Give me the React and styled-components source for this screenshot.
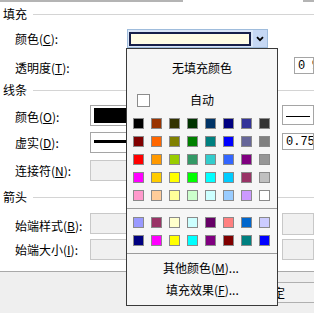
import React from "react";
import styled, { createGlobalStyle } from "styled-components";

const Global = createGlobalStyle`
  html, body { margin: 0; padding: 0; background: #fff; }
  body { width: 314px; height: 313px; overflow: hidden; font-family: "Noto Sans CJK SC", "Noto Sans", sans-serif; font-size: 12px; color: #000; }
  #root { width: 314px; height: 313px; }
`;

const Dialog = styled.div`
  position: relative;
  width: 314px;
  height: 313px;
  overflow: hidden;
  background: #fff;
  display: flex;
  flex-direction: column;
`;

const TopBar = styled.div`
  height: 2px;
  display: grid;
  grid-template-columns: 183px 1fr 11px;
  & > span:nth-child(1), & > span:nth-child(3) { background: #b4b4b4; }
`;

const Heading = styled.div`
  margin-top: ${p => p.$mt}px;
  height: 16px;
  padding-left: 3px;
  display: flex;
  align-items: center;
  gap: 6px;
  line-height: 16px;
  white-space: nowrap;
  &::after { content: ""; flex: 1; height: 1px; background: #d4d4d4; }
`;

const Row = styled.div`
  margin-top: ${p => p.$mt}px;
  height: ${p => p.$h}px;
  padding-left: 15px;
  display: grid;
  grid-template-columns: ${p => p.$cols};
  align-items: stretch;
`;

const Label = styled.div`
  display: flex;
  align-items: center;
  white-space: nowrap;
  padding-top: ${p => p.$dy || 0}px;
  u { text-decoration: underline; }
`;

const Field = styled.div`
  box-sizing: border-box;
  border: 1px solid ${p => (p.$disabled ? "#c8c8c8" : "#a5a5a5")};
  background: ${p => (p.$disabled ? "#f0f0f0" : "#fff")};
  margin-top: ${p => p.$mt || 0}px;
  height: ${p => p.$h || 21}px;
  margin-left: ${p => p.$ml || 0}px;
  padding: 2px 3px;
  display: flex;
  align-items: center;
  font-family: "Liberation Mono", "DejaVu Sans Mono", monospace;
  font-size: 12px;
  white-space: nowrap;
  overflow: hidden;
`;

const Fill = styled.div`
  flex: 1;
  align-self: stretch;
  background: #000;
`;

const Stroke = styled.div`
  flex: 1;
  height: ${p => p.$w}px;
  background: #000;
  margin-top: ${p => p.$dy || 0}px;
`;

const Combo = styled.div`
  box-sizing: border-box;
  width: 141px;
  height: 19px;
  border: 1px solid #9fbcdc;
  display: grid;
  grid-template-columns: 1fr 14px;
  background: #dbe7f7;
`;

const ComboField = styled.div`
  margin: 2px 2px 1px 1px;
  border: 2px solid #18214a;
  background: #fffde6;
`;

const ComboButton = styled.div`
  background: #c6d8f4;
  display: flex;
  align-items: center;
  justify-content: center;
`;

const Footer = styled.div`
  margin-top: 11px;
  flex: 1;
  border-top: 1px solid #a9a9a9;
  background: #efefef;
  padding: 10px 0 0 228px;
`;

const Button = styled.div`
  box-sizing: border-box;
  width: 90px;
  height: 21px;
  border: 1px solid #b0b0b0;
  background: #f2f2f2;
  display: flex;
  align-items: center;
  justify-content: center;
`;

const Menu = styled.div`
  position: absolute;
  left: 126px;
  top: 48px;
  width: 152px;
  height: 258px;
  box-sizing: border-box;
  border: 1px solid #3a3a3a;
  background: #f6f6f6;
  display: flex;
  flex-direction: column;
`;

const NoFill = styled.div`
  height: 38px;
  line-height: 38px;
  text-align: center;
`;

const AutoRow = styled.div`
  margin-top: 6px;
  height: 14px;
  padding: 0 10px;
  display: grid;
  grid-template-columns: 13px 1fr 13px;
  align-items: center;
  text-align: center;
  line-height: 14px;
`;

const Check = styled.span`
  box-sizing: border-box;
  width: 13px;
  height: 13px;
  border: 1px solid #8c8c8c;
  background: #fff;
`;

const Palette = styled.div`
  margin-top: ${p => p.$mt}px;
  padding-left: 6px;
  display: grid;
  grid-template-columns: repeat(8, 11px);
  grid-auto-rows: 11px;
  gap: 7px;
`;

const Swatch = styled.span`
  box-sizing: border-box;
  background: ${p => p.$c};
  border: 1px solid #8a8a8a;
`;

const Sep = styled.div`
  margin-top: ${p => p.$mt}px;
  height: 1px;
  background: #9c9c9c;
`;

const MenuItem = styled.div`
  margin-top: ${p => p.$mt || 0}px;
  height: 22px;
  line-height: 22px;
  padding-left: ${p => p.$pl}px;
  white-space: nowrap;
  u { text-decoration: underline; }
`;

const std = [
  "#000000", "#993300", "#333300", "#003300", "#003366", "#000080", "#333399", "#333333",
  "#800000", "#FF6600", "#808000", "#008000", "#008080", "#0000FF", "#666699", "#808080",
  "#FF0000", "#FF9900", "#99CC00", "#339966", "#33CCCC", "#3366FF", "#800080", "#969696",
  "#FF00FF", "#FFCC00", "#FFFF00", "#00FF00", "#00FFFF", "#00CCFF", "#993366", "#C0C0C0",
  "#FF99CC", "#FFCC99", "#FFFF99", "#CCFFCC", "#CCFFFF", "#99CCFF", "#CC99FF", "#FFFFFF",
];
const chart = [
  "#9999FF", "#993366", "#FFFFCC", "#CCFFFF", "#660066", "#FF8080", "#0066CC", "#CCCCFF",
  "#000080", "#FF00FF", "#FFFF00", "#00FFFF", "#800080", "#800000", "#008080", "#0000FF",
];

const COLS = "75px 170px 1fr";

export default function App() {
  return (
    <>
      <Global />
      <Dialog>
        <TopBar><span /><span /><span /></TopBar>
        <Heading $mt={4}>填充</Heading>
        <Row $mt={7} $h={19} $cols="112px 141px 1fr">
          <Label>颜色(<u>C</u>):</Label>
          <Combo>
            <ComboField />
            <ComboButton>
              <svg width="8" height="6" viewBox="0 0 8 6">
                <path d="M1 1.2 L4 4.2 L7 1.2" fill="none" stroke="#000" strokeWidth="1.8" />
              </svg>
            </ComboButton>
          </Combo>
        </Row>
        <Row $mt={9} $h={17} $cols={COLS}>
          <Label $dy={2}>透明度(<u>T</u>):</Label>
          <span />
          <Field $h={17} $ml={34}>0 %</Field>
        </Row>
        <Heading $mt={8}>线条</Heading>
        <Row $mt={7} $h={21} $cols={COLS}>
          <Label $dy={2}>颜色(<u>O</u>):</Label>
          <Field><Fill /></Field>
          <Field $h={20} $ml={22}><Stroke $w={1} $dy={2} /></Field>
        </Row>
        <Row $mt={6} $h={21} $cols={COLS}>
          <Label>虚实(<u>D</u>):</Label>
          <Field><Stroke $w={3} $dy={-3} /></Field>
          <Field $mt={1} $h={17} $ml={22}>0.75</Field>
        </Row>
        <Row $mt={7} $h={21} $cols={COLS}>
          <Label>连接符(<u>N</u>):</Label>
          <Field $disabled />
          <span />
        </Row>
        <Heading $mt={8}>箭头</Heading>
        <Row $mt={8} $h={21} $cols={COLS}>
          <Label $dy={2}>始端样式(<u>B</u>):</Label>
          <Field $disabled />
          <Field $disabled $h={22} $ml={22} />
        </Row>
        <Row $mt={5} $h={21} $cols={COLS}>
          <Label>始端大小(<u>I</u>):</Label>
          <Field $disabled />
          <Field $disabled $ml={22} />
        </Row>
        <Footer>
          <Button>确定</Button>
        </Footer>

        <Menu>
          <NoFill>无填充颜色</NoFill>
          <AutoRow>
            <Check />
            <span>自动</span>
            <span />
          </AutoRow>
          <Palette $mt={11}>
            {std.map((c, i) => <Swatch key={i} $c={c} />)}
          </Palette>
          <Sep $mt={7} />
          <Palette $mt={8}>
            {chart.map((c, i) => <Swatch key={i} $c={c} />)}
          </Palette>
          <Sep $mt={7} />
          <MenuItem $mt={3} $pl={36}>其他颜色(<u>M</u>)...</MenuItem>
          <MenuItem $pl={39}>填充效果(<u>F</u>)...</MenuItem>
        </Menu>
      </Dialog>
    </>
  );
}
